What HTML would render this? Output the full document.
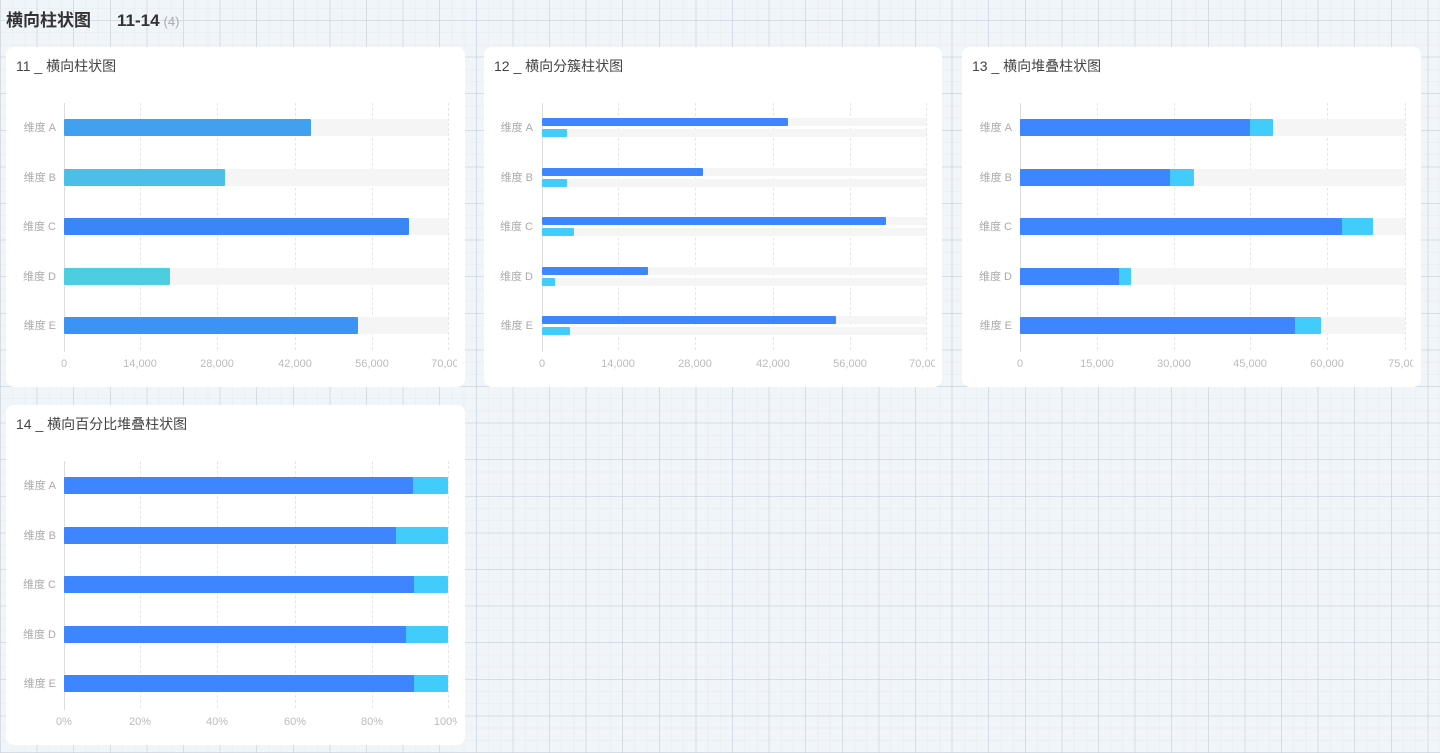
<!DOCTYPE html>
<html><head><meta charset="utf-8"><style>
*{margin:0;padding:0;box-sizing:border-box}
body{width:1440px;height:753px;overflow:hidden;position:relative;font-family:"Liberation Sans","Noto Sans CJK SC",sans-serif;
background-color:#f0f5f9;
background-image:
repeating-linear-gradient(90deg,rgba(200,208,216,.6) 0 1px,transparent 1px 36.6px),
repeating-linear-gradient(0deg,rgba(200,208,216,.6) 0 1px,transparent 1px 36.6px),
repeating-linear-gradient(90deg,rgba(215,220,226,.2) 0 1px,transparent 1px 12.2px),
repeating-linear-gradient(0deg,rgba(215,220,226,.2) 0 1px,transparent 1px 12.2px);}
.hd{position:absolute;left:6px;top:6px;font-size:17px;font-weight:bold;color:#333}
.hd span{margin-left:26px}
.hd i{font-style:normal;font-weight:normal;font-size:13px;color:#aaa;margin-left:4px}
.card{position:absolute;background:#fff;border-radius:8px;width:459px;height:340px;overflow:hidden}
.t{position:absolute;left:10px;top:9px;font-size:14px;color:#444}
.g{position:absolute;top:56px;height:247px;border-left:1px dashed #e6e6e6}
.ax{position:absolute;left:58px;top:56px;height:249px;border-left:1px solid #ddd}
.tr{position:absolute;left:58px;width:384px;background:#f5f5f5}
.b{position:absolute;left:58px;border-radius:1px}
.l{position:absolute;right:409px;font-size:11px;color:#aaa;white-space:nowrap;line-height:14px}
.clip{position:absolute;left:0;top:0;width:451px;height:340px;overflow:hidden}
.x{position:absolute;top:310px;font-size:11px;color:#bbb;width:60px;text-align:center;line-height:14px}
</style></head><body>
<div class="hd">横向柱状图<span>11-14</span><i>(4)</i></div>

<div class="card" style="left:6px;top:47px">
<div class="t">11 _ 横向柱状图</div>
<div class="g" style="left:134px"></div><div class="g" style="left:211px"></div><div class="g" style="left:289px"></div><div class="g" style="left:366px"></div><div class="g" style="left:442px"></div>
<div class="ax"></div>
<div class="tr" style="top:72px;height:17px"></div><div class="b" style="top:72px;height:17px;width:247px;background:#42a0f0"></div>
<div class="tr" style="top:122px;height:17px"></div><div class="b" style="top:122px;height:17px;width:161px;background:#4bbfe8"></div>
<div class="tr" style="top:171px;height:17px"></div><div class="b" style="top:171px;height:17px;width:345px;background:#3a86f8"></div>
<div class="tr" style="top:221px;height:17px"></div><div class="b" style="top:221px;height:17px;width:106px;background:#4ccde0"></div>
<div class="tr" style="top:270px;height:17px"></div><div class="b" style="top:270px;height:17px;width:294px;background:#3b93f5"></div>
<div class="l" style="top:74px">维度 A</div><div class="l" style="top:124px">维度 B</div><div class="l" style="top:173px">维度 C</div><div class="l" style="top:223px">维度 D</div><div class="l" style="top:272px">维度 E</div>
<div class="clip"><div class="x" style="left:28px">0</div><div class="x" style="left:104px">14,000</div><div class="x" style="left:181px">28,000</div><div class="x" style="left:259px">42,000</div><div class="x" style="left:336px">56,000</div><div class="x" style="left:412px">70,000</div></div>
</div>

<div class="card" style="left:484px;top:47px;width:458px">
<div class="t">12 _ 横向分簇柱状图</div>
<div class="g" style="left:134px"></div><div class="g" style="left:211px"></div><div class="g" style="left:289px"></div><div class="g" style="left:366px"></div><div class="g" style="left:442px"></div>
<div class="ax"></div>
<div class="tr" style="top:71px;height:8px"></div><div class="b" style="top:71px;height:8px;width:246px;background:#3d86ff"></div>
<div class="tr" style="top:82px;height:8px"></div><div class="b" style="top:82px;height:8px;width:25px;background:#42ccfb"></div>
<div class="tr" style="top:121px;height:8px"></div><div class="b" style="top:121px;height:8px;width:161px;background:#3d86ff"></div>
<div class="tr" style="top:132px;height:8px"></div><div class="b" style="top:132px;height:8px;width:25px;background:#42ccfb"></div>
<div class="tr" style="top:170px;height:8px"></div><div class="b" style="top:170px;height:8px;width:344px;background:#3d86ff"></div>
<div class="tr" style="top:181px;height:8px"></div><div class="b" style="top:181px;height:8px;width:32px;background:#42ccfb"></div>
<div class="tr" style="top:220px;height:8px"></div><div class="b" style="top:220px;height:8px;width:106px;background:#3d86ff"></div>
<div class="tr" style="top:231px;height:8px"></div><div class="b" style="top:231px;height:8px;width:13px;background:#42ccfb"></div>
<div class="tr" style="top:269px;height:8px"></div><div class="b" style="top:269px;height:8px;width:294px;background:#3d86ff"></div>
<div class="tr" style="top:280px;height:8px"></div><div class="b" style="top:280px;height:8px;width:28px;background:#42ccfb"></div>
<div class="l" style="top:74px">维度 A</div><div class="l" style="top:124px">维度 B</div><div class="l" style="top:173px">维度 C</div><div class="l" style="top:223px">维度 D</div><div class="l" style="top:272px">维度 E</div>
<div class="clip"><div class="x" style="left:28px">0</div><div class="x" style="left:104px">14,000</div><div class="x" style="left:181px">28,000</div><div class="x" style="left:259px">42,000</div><div class="x" style="left:336px">56,000</div><div class="x" style="left:412px">70,000</div></div>
</div>

<div class="card" style="left:962px;top:47px">
<div class="t">13 _ 横向堆叠柱状图</div>
<div class="g" style="left:135px"></div><div class="g" style="left:212px"></div><div class="g" style="left:288px"></div><div class="g" style="left:365px"></div><div class="g" style="left:443px"></div>
<div class="ax"></div>
<div class="tr" style="top:72px;height:17px;width:385px"></div><div class="b" style="top:72px;height:17px;width:253px;background:#42ccfb"></div><div class="b" style="top:72px;height:17px;width:230px;background:#3d86ff"></div>
<div class="tr" style="top:122px;height:17px;width:385px"></div><div class="b" style="top:122px;height:17px;width:174px;background:#42ccfb"></div><div class="b" style="top:122px;height:17px;width:150px;background:#3d86ff"></div>
<div class="tr" style="top:171px;height:17px;width:385px"></div><div class="b" style="top:171px;height:17px;width:353px;background:#42ccfb"></div><div class="b" style="top:171px;height:17px;width:322px;background:#3d86ff"></div>
<div class="tr" style="top:221px;height:17px;width:385px"></div><div class="b" style="top:221px;height:17px;width:111px;background:#42ccfb"></div><div class="b" style="top:221px;height:17px;width:99px;background:#3d86ff"></div>
<div class="tr" style="top:270px;height:17px;width:385px"></div><div class="b" style="top:270px;height:17px;width:301px;background:#42ccfb"></div><div class="b" style="top:270px;height:17px;width:275px;background:#3d86ff"></div>
<div class="l" style="top:74px">维度 A</div><div class="l" style="top:124px">维度 B</div><div class="l" style="top:173px">维度 C</div><div class="l" style="top:223px">维度 D</div><div class="l" style="top:272px">维度 E</div>
<div class="clip"><div class="x" style="left:28px">0</div><div class="x" style="left:105px">15,000</div><div class="x" style="left:182px">30,000</div><div class="x" style="left:258px">45,000</div><div class="x" style="left:335px">60,000</div><div class="x" style="left:413px">75,000</div></div>
</div>

<div class="card" style="left:6px;top:405px">
<div class="t">14 _ 横向百分比堆叠柱状图</div>
<div class="g" style="left:134px"></div><div class="g" style="left:211px"></div><div class="g" style="left:289px"></div><div class="g" style="left:366px"></div><div class="g" style="left:442px"></div>
<div class="ax"></div>
<div class="b" style="top:72px;height:17px;width:384px;background:#42ccfb"></div><div class="b" style="top:72px;height:17px;width:349px;background:#3d86ff"></div>
<div class="b" style="top:122px;height:17px;width:384px;background:#42ccfb"></div><div class="b" style="top:122px;height:17px;width:332px;background:#3d86ff"></div>
<div class="b" style="top:171px;height:17px;width:384px;background:#42ccfb"></div><div class="b" style="top:171px;height:17px;width:350px;background:#3d86ff"></div>
<div class="b" style="top:221px;height:17px;width:384px;background:#42ccfb"></div><div class="b" style="top:221px;height:17px;width:342px;background:#3d86ff"></div>
<div class="b" style="top:270px;height:17px;width:384px;background:#42ccfb"></div><div class="b" style="top:270px;height:17px;width:350px;background:#3d86ff"></div>
<div class="l" style="top:74px">维度 A</div><div class="l" style="top:124px">维度 B</div><div class="l" style="top:173px">维度 C</div><div class="l" style="top:223px">维度 D</div><div class="l" style="top:272px">维度 E</div>
<div class="clip"><div class="x" style="left:28px">0%</div><div class="x" style="left:104px">20%</div><div class="x" style="left:181px">40%</div><div class="x" style="left:259px">60%</div><div class="x" style="left:336px">80%</div><div class="x" style="left:412px">100%</div></div>
</div>
</body></html>
